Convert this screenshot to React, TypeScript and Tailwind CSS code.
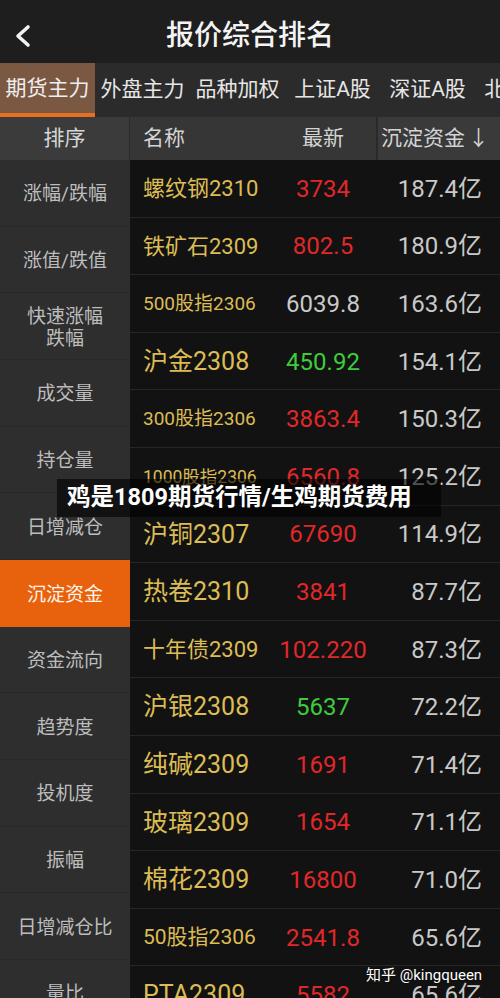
const font = { fontFamily: "Roboto, 'Noto Sans CJK SC', sans-serif" };

type Row = {
  name: string;
  size: string;
  price: string;
  tone: 'up' | 'down' | 'flat';
  amount: string;
};

const rows: Row[] = [
  { name: '螺纹钢2310', size: 'text-[22px]', price: '3734', tone: 'up', amount: '187.4亿' },
  { name: '铁矿石2309', size: 'text-[22px]', price: '802.5', tone: 'up', amount: '180.9亿' },
  { name: '500股指2306', size: 'text-[19px]', price: '6039.8', tone: 'flat', amount: '163.6亿' },
  { name: '沪金2308', size: 'text-[25px]', price: '450.92', tone: 'down', amount: '154.1亿' },
  { name: '300股指2306', size: 'text-[19px]', price: '3863.4', tone: 'up', amount: '150.3亿' },
  { name: '1000股指2306', size: 'text-[17.5px]', price: '6560.8', tone: 'up', amount: '125.2亿' },
  { name: '沪铜2307', size: 'text-[25px]', price: '67690', tone: 'up', amount: '114.9亿' },
  { name: '热卷2310', size: 'text-[25px]', price: '3841', tone: 'up', amount: '87.7亿' },
  { name: '十年债2309', size: 'text-[22px]', price: '102.220', tone: 'up', amount: '87.3亿' },
  { name: '沪银2308', size: 'text-[25px]', price: '5637', tone: 'down', amount: '72.2亿' },
  { name: '纯碱2309', size: 'text-[25px]', price: '1691', tone: 'up', amount: '71.4亿' },
  { name: '玻璃2309', size: 'text-[25px]', price: '1654', tone: 'up', amount: '71.1亿' },
  { name: '棉花2309', size: 'text-[25px]', price: '16800', tone: 'up', amount: '71.0亿' },
  { name: '50股指2306', size: 'text-[21px]', price: '2541.8', tone: 'up', amount: '65.6亿' },
  { name: 'PTA2309', size: 'text-[25px]', price: '5582', tone: 'up', amount: '65.6亿' },
];

const sorts = [
  '涨幅/跌幅',
  '涨值/跌值',
  '快速涨幅\n跌幅',
  '成交量',
  '持仓量',
  '日增减仓',
  '沉淀资金',
  '资金流向',
  '趋势度',
  '投机度',
  '振幅',
  '日增减仓比',
  '量比',
];

const tabs = ['期货主力', '外盘主力', '品种加权', '上证A股', '深证A股', '北证A股'];

const toneClass = {
  up: 'text-[#e0282a]',
  down: 'text-[#3fcc3c]',
  flat: 'text-[#c9c9c9]',
};

export default function App() {
  return (
    <div className="relative h-[998px] w-[500px] overflow-hidden bg-[#121212]" style={font}>
      {/* Title bar */}
      <div className="relative flex h-[63px] items-center justify-center bg-[#1e1e1e] pt-[8px]">
        <svg className="absolute left-[12px] top-[24px]" width="22" height="24" viewBox="0 0 22 24">
          <polyline points="16,3 6,12 16,21" fill="none" stroke="#f2f2f2" strokeWidth="3.6" strokeLinecap="round" strokeLinejoin="round" />
        </svg>
        <span className="text-[28px] font-medium text-[#f4f4f4]">报价综合排名</span>
      </div>

      {/* Market tabs */}
      <div className="flex h-[54px] overflow-hidden bg-[#2b2b2b]">
        {tabs.map((t, i) => (
          <div
            key={t}
            className={
              i === 0
                ? 'flex h-full w-[95px] shrink-0 items-center justify-center border-b-[4px] border-[#e5701f] bg-[#7a5842] pt-[2px] text-[21px] text-[#eee]'
                : 'flex h-full w-[95px] shrink-0 items-center justify-center whitespace-nowrap text-[21px] text-[#e6e6e6]'
            }
          >
            {t}
          </div>
        ))}
      </div>

      <div className="flex">
        {/* Sort menu */}
        <div className="w-[130px] shrink-0 bg-[#2e2e2e]">
          <div className="flex h-[43px] items-center justify-center border-r border-[#2a2a2a] bg-[#3b3b3b] text-[21px] text-[#d6d6d6]">
            排序
          </div>
          {sorts.map((s, i) => (
            <div
              key={s}
              className={
                i === 6
                  ? 'flex h-[66.67px] items-center justify-center whitespace-pre-line bg-[#e8610c] pt-[3px] text-center text-[19px] leading-[22px] text-[#fff3ea]'
                  : 'flex h-[66.67px] items-center justify-center whitespace-pre-line border-b border-[#282828] pt-[3px] text-center text-[19px] leading-[22px] text-[#bdbdbd]'
              }
            >
              {s}
            </div>
          ))}
        </div>

        {/* Ranking table */}
        <div className="flex-1">
          <div className="flex h-[43px] items-center bg-[#363636] text-[21px] text-[#d4d4d4]">
            <div className="w-[140px] pl-[13px]">名称</div>
            <div className="w-[106px] text-center">最新</div>
            <div className="flex h-full flex-1 items-center border-l-2 border-[#2a2a2a] bg-[#3a3a3a] pl-[3px]">
              沉淀资金<span className="ml-[3px]">↓</span>
            </div>
          </div>
          {rows.map((r) => (
            <div key={r.name} className="flex h-[57.6px] items-center border-b border-[#262626] pt-[1px]">
              <div className={`w-[140px] pl-[13px] text-[#dcbc55] ${r.size}`}>{r.name}</div>
              <div className={`w-[106px] text-center text-[24px] ${toneClass[r.tone]}`}>{r.price}</div>
              <div className="flex-1 pr-[18px] text-right text-[24px] text-[#c9c9c9]">{r.amount}</div>
            </div>
          ))}
        </div>
      </div>

      {/* Article title overlay */}
      <div className="absolute left-[57px] top-[479px] flex h-[38px] w-[384px] items-center bg-black/60 pl-[10px]">
        <span className="text-[23.5px] font-bold text-white">鸡是1809期货行情/生鸡期货费用</span>
      </div>

      {/* Watermark */}
      <div className="absolute left-[366px] top-[964px] text-[15px] text-white [text-shadow:0_0_2px_rgba(0,0,0,0.6)]">
        知乎 @kingqueen
      </div>
    </div>
  );
}
